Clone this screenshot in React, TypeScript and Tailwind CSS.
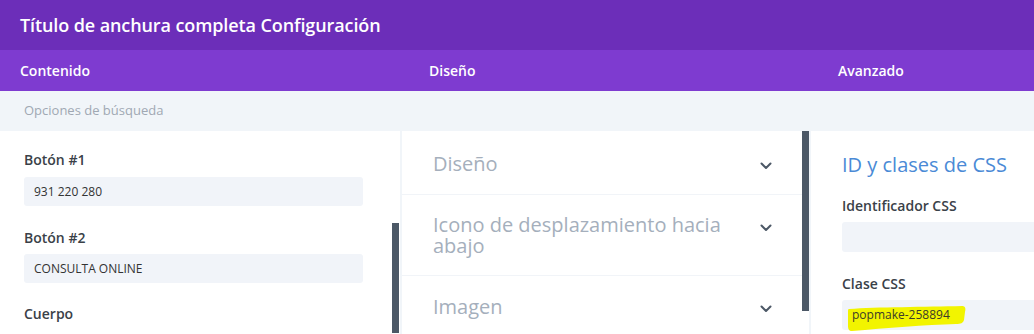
import React from "react";

function Chevron() {
  return (
    <svg width="12" height="8" viewBox="0 0 12 8" className="shrink-0">
      <polyline points="1.5,1.5 6,6 10.5,1.5" fill="none" stroke="#4c5866" strokeWidth="2" strokeLinecap="round" strokeLinejoin="round" />
    </svg>
  );
}

export default function App() {
  const font = { fontFamily: '"Open Sans", "Noto Sans", sans-serif' };
  return (
    <div className="w-[1034px] h-[334px] overflow-hidden bg-[#f1f5f9] flex flex-col" style={font}>
      <div className="h-[50px] shrink-0 bg-[#6c2eb9] flex items-center pl-[20px]">
        <span className="text-white text-[18px] font-semibold leading-none tracking-[-0.1px]">Título de anchura completa Configuración</span>
      </div>
      <div className="h-[41px] shrink-0 bg-[#7e3bd0] flex items-center">
        <div className="w-[409px] pl-[20px] text-white text-[14px] font-semibold">Contenido</div>
        <div className="w-[409px] pl-[20px] text-white text-[14px] font-semibold">Diseño</div>
        <div className="w-[216px] pl-[20px] text-white text-[14px] font-semibold">Avanzado</div>
      </div>
      <div className="h-[40px] shrink-0 flex items-center pl-[24px]">
        <span className="text-[13px] text-[#a0a8b3] font-medium">Opciones de búsqueda</span>
      </div>
      <div className="flex-1 flex gap-[2px] min-h-0">
        {/* Column 1 */}
        <div className="relative w-[400px] bg-white pt-[19px] pl-[24px]">
          <div className="text-[14px] font-semibold text-[#3a4148] leading-[20px]">Botón #1</div>
          <div className="mt-[7px] w-[339px] h-[29px] bg-[#f1f4f9] rounded-[3px] flex items-center pl-[10px] text-[12px] text-[#333]">931 220 280</div>
          <div className="mt-[22px] text-[14px] font-semibold text-[#3a4148] leading-[20px]">Botón #2</div>
          <div className="mt-[6px] w-[339px] h-[29px] bg-[#f1f4f9] rounded-[3px] flex items-center pl-[10px] text-[12px] text-[#333]">CONSULTA ONLINE</div>
          <div className="mt-[21px] text-[14px] font-semibold text-[#3a4148] leading-[20px]">Cuerpo</div>
          <div className="absolute left-[392px] top-[92px] w-[7px] h-[110px] bg-[#4c5866]" />
        </div>
        {/* Column 2 */}
        <div className="relative w-[407px] bg-white">
          <div className="h-[64px] border-b border-[#f1f4f8] flex items-start justify-between pl-[31px] pr-[37px] pt-[19px]">
            <span className="text-[20px] text-[#a5afbc] leading-[28px]">Diseño</span>
            <div className="pt-[12px]"><Chevron /></div>
          </div>
          <div className="h-[81px] border-b border-[#f1f4f8] flex items-start justify-between pl-[31px] pr-[37px] pt-[19px]">
            <span className="text-[20px] text-[#a5afbc] leading-[21px] w-[320px]">Icono de desplazamiento hacia abajo</span>
            <div className="pt-[10px]"><Chevron /></div>
          </div>
          <div className="flex items-start justify-between pl-[31px] pr-[37px] pt-[17px]">
            <span className="text-[20px] text-[#a5afbc] leading-[28px]">Imagen</span>
            <div className="pt-[12px]"><Chevron /></div>
          </div>
          <div className="absolute right-0 top-0 w-[7px] h-[180px] bg-[#4c5866]" />
        </div>
        {/* Column 3 */}
        <div className="flex-1 bg-white pl-[31px] pt-[20px]">
          <div className="text-[20px] text-[#4a8ad6] leading-[28px]">ID y clases de CSS</div>
          <div className="mt-[17px] text-[14px] font-semibold text-[#3a4148] leading-[20px]">Identificador CSS</div>
          <div className="mt-[6px] h-[30px] bg-[#f1f4f9] rounded-l-[3px]" />
          <div className="mt-[22px] text-[14px] font-semibold text-[#3a4148] leading-[20px]">Clase CSS</div>
          <div className="relative mt-[6px] h-[30px] bg-[#f1f4f9] rounded-l-[3px] flex items-center pl-[10px]">
            <svg className="absolute left-[4px] top-[4px]" width="122" height="28" viewBox="0 0 122 28">
              <path d="M3 5 C30 3 80 3 116 2 C119 2 120 4 119 8 L118 16 C117 19 115 20 110 20 C80 21 40 24 6 27 C3 27 2 25 2 22 L2 8 C2 6 2 5 3 5 Z" fill="#f2f400" />
            </svg>
            <span className="relative text-[12px] text-[#3b3b2a] leading-none">popmake-258894</span>
          </div>
        </div>
      </div>
    </div>
  );
}
